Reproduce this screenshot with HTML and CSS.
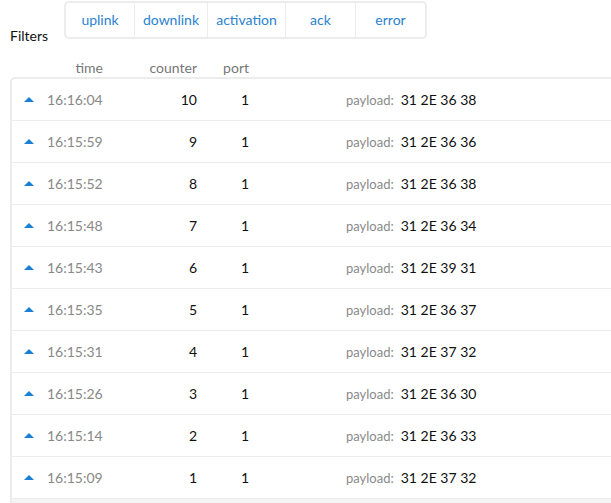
FILE: index.html
```html
<!DOCTYPE html>
<html>
<head>
<meta charset="utf-8">
<link rel="stylesheet" href="styles.css">
</head>
<body>
<div class="filters">
  <span class="filters-label">Filters</span>
  <div class="btn-group">
    <button class="btn w-uplink">uplink</button>
    <button class="btn w-downlink">downlink</button>
    <button class="btn w-activation">activation</button>
    <button class="btn w-ack">ack</button>
    <button class="btn w-error">error</button>
  </div>
</div>
<div class="head">
  <span></span><span class="r">time</span><span class="r">counter</span><span class="r">port</span>
</div>
<div class="list">
  <div class="row"><span class="caret"></span><span class="time">16:16:04</span><span class="num">10</span><span class="num">1</span><span></span><span class="payload"><span class="pl">payload:</span>31 2E 36 38</span></div>
  <div class="row"><span class="caret"></span><span class="time">16:15:59</span><span class="num">9</span><span class="num">1</span><span></span><span class="payload"><span class="pl">payload:</span>31 2E 36 36</span></div>
  <div class="row"><span class="caret"></span><span class="time">16:15:52</span><span class="num">8</span><span class="num">1</span><span></span><span class="payload"><span class="pl">payload:</span>31 2E 36 38</span></div>
  <div class="row"><span class="caret"></span><span class="time">16:15:48</span><span class="num">7</span><span class="num">1</span><span></span><span class="payload"><span class="pl">payload:</span>31 2E 36 34</span></div>
  <div class="row"><span class="caret"></span><span class="time">16:15:43</span><span class="num">6</span><span class="num">1</span><span></span><span class="payload"><span class="pl">payload:</span>31 2E 39 31</span></div>
  <div class="row"><span class="caret"></span><span class="time">16:15:35</span><span class="num">5</span><span class="num">1</span><span></span><span class="payload"><span class="pl">payload:</span>31 2E 36 37</span></div>
  <div class="row"><span class="caret"></span><span class="time">16:15:31</span><span class="num">4</span><span class="num">1</span><span></span><span class="payload"><span class="pl">payload:</span>31 2E 37 32</span></div>
  <div class="row"><span class="caret"></span><span class="time">16:15:26</span><span class="num">3</span><span class="num">1</span><span></span><span class="payload"><span class="pl">payload:</span>31 2E 36 30</span></div>
  <div class="row"><span class="caret"></span><span class="time">16:15:14</span><span class="num">2</span><span class="num">1</span><span></span><span class="payload"><span class="pl">payload:</span>31 2E 36 33</span></div>
  <div class="row"><span class="caret"></span><span class="time">16:15:09</span><span class="num">1</span><span class="num">1</span><span></span><span class="payload"><span class="pl">payload:</span>31 2E 37 32</span></div>
  <div class="row empty"></div>
</div>
</body>
</html>
```
FILE: styles.css
```css
html, body {
  margin: 0;
  padding: 0;
  background: #fff;
  font-family: Lato, "Liberation Sans", sans-serif;
  overflow: hidden;
}
body {
  width: 611px;
  height: 503px;
}
.filters {
  display: flex;
  align-items: flex-end;
  padding: 1px 0 0 10px;
}
.filters-label {
  font-size: 14px;
  color: #111;
  width: 54px;
  line-height: 14px;
  margin-bottom: -4px;
}
.btn-group {
  display: flex;
  border: 2px solid #ececec;
  border-radius: 5px;
  height: 34px;
}
.btn {
  font-family: inherit;
  font-size: 14px;
  color: #2b82d0;
  background: #fff;
  border: 0;
  border-left: 1px solid #ececec;
  padding: 0;
  margin: 0;
  height: 34px;
  line-height: 34px;
  text-align: center;
}
.btn:first-child { border-left: 0; border-radius: 4px 0 0 4px; }
.btn:last-child { border-radius: 0 4px 4px 0; }
.w-uplink { width: 68px; }
.w-downlink { width: 73px; }
.w-activation { width: 78px; }
.w-ack { width: 70px; }
.w-error { width: 70px; }

.head, .row {
  display: grid;
  grid-template-columns: 35px 56px 94px 52px 97px 1fr;
  align-items: center;
}
.head {
  margin: 18px 0 0 12px;
  height: 20px;
  font-size: 14px;
  color: #777;
}
.r { text-align: right; }
.list {
  margin-left: 10px;
  margin-right: -10px;
  border: 2px solid #ececec;
  border-right: 0;
  border-radius: 5px 0 0 0;
}
.row {
  height: 41px;
  border-bottom: 1px solid #ececec;
  font-size: 14px;
  color: #111;
}
.row.empty {
  height: 40px;
  background: #f4f4f4;
  border-bottom: 0;
}
.caret {
  justify-self: start;
  margin-left: 12px;
  width: 0;
  height: 0;
  border-left: 5px solid transparent;
  border-right: 5px solid transparent;
  border-bottom: 5px solid #1a7fd6;
}
.time { color: #888; }
.num { text-align: right; }
.payload { white-space: nowrap; }
.pl {
  font-size: 13px;
  color: #8a8a8a;
  margin-right: 7px;
}
```
